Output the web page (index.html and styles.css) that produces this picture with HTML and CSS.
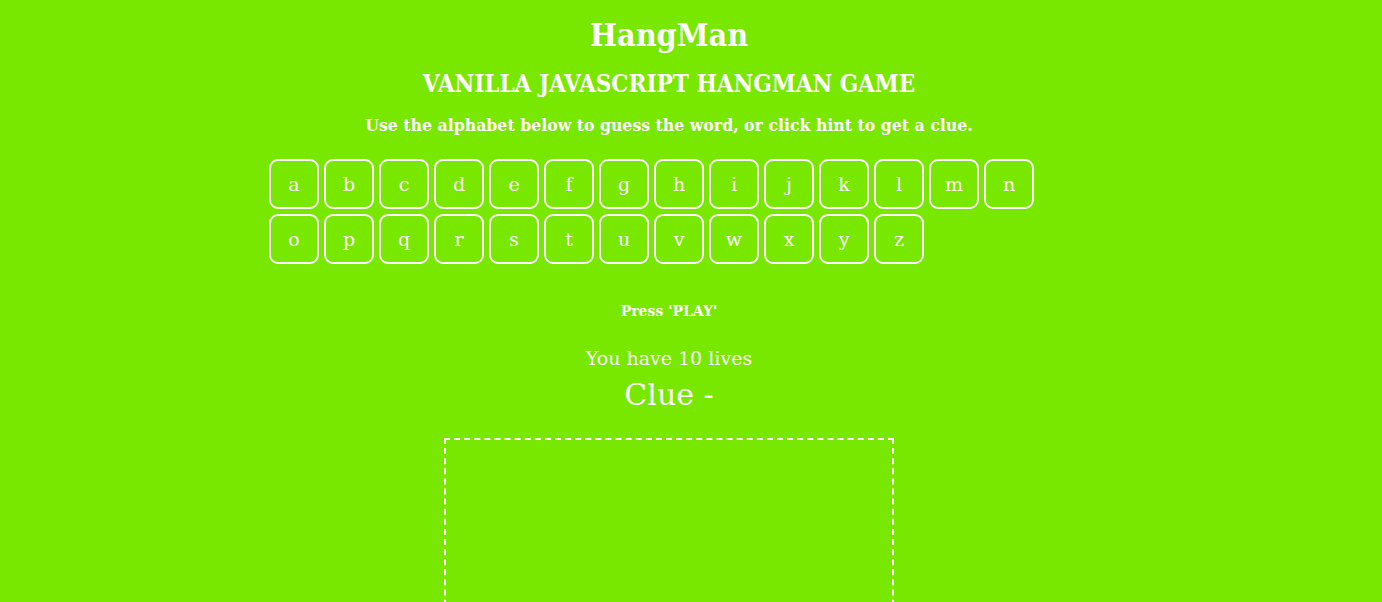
FILE: index.html
```html
<!DOCTYPE html>
<html lang="en">
<head>
<meta charset="utf-8">
<title>HangMan</title>
<link rel="stylesheet" href="styles.css">
</head>
<body>
<div class="wrapper">
  <h1 class="title">HangMan</h1>
  <h2 class="subtitle">VANILLA JAVASCRIPT HANGMAN GAME</h2>
  <p class="intro">Use the alphabet below to guess the word, or click hint to get a clue.</p>
  <div class="buttons">
    <ul class="alphabet">
      <li class="letter">a</li><li class="letter">b</li><li class="letter">c</li><li class="letter">d</li><li class="letter">e</li><li class="letter">f</li><li class="letter">g</li><li class="letter">h</li><li class="letter">i</li><li class="letter">j</li><li class="letter">k</li><li class="letter">l</li><li class="letter">m</li><li class="letter">n</li>
      <li class="letter">o</li><li class="letter">p</li><li class="letter">q</li><li class="letter">r</li><li class="letter">s</li><li class="letter">t</li><li class="letter">u</li><li class="letter">v</li><li class="letter">w</li><li class="letter">x</li><li class="letter">y</li><li class="letter">z</li>
    </ul>
  </div>
  <p class="catagory">Press 'PLAY'</p>
  <div class="hold"></div>
  <p class="lives">You have 10 lives</p>
  <p class="clue">Clue -</p>
  <div class="canvas-box"></div>
</div>
</body>
</html>
```

FILE: styles.css
```css
html, body {
  margin: 0;
  padding: 0;
}
body {
  background: #78e800;
  color: #ffffff;
  font-family: "DejaVu Serif", "Liberation Serif", serif;
  overflow: hidden;
}
.wrapper {
  margin-right: 44px;
  text-align: center;
}
.title {
  margin: 0;
  padding-top: 14px;
  font-family: "DejaVu Serif Condensed", "DejaVu Serif", serif;
  font-size: 32px;
  line-height: 42px;
  font-weight: bold;
}
.subtitle {
  margin: 12px 0 0;
  font-family: "DejaVu Serif Condensed", "DejaVu Serif", serif;
  font-size: 24px;
  line-height: 32px;
  font-weight: bold;
}
.intro {
  margin: 13px 0 0;
  font-family: "DejaVu Serif Condensed", "DejaVu Serif", serif;
  font-size: 17.5px;
  line-height: 24px;
  font-weight: bold;
}
.buttons {
  width: 800px;
  margin: 22px auto 0;
}
.alphabet {
  list-style: none;
  margin: 0;
  padding: 0;
  display: flex;
  flex-wrap: wrap;
  gap: 5px;
}
.letter {
  box-sizing: border-box;
  width: 50px;
  height: 50px;
  border: 2px solid #ffffff;
  border-radius: 9px;
  display: flex;
  align-items: center;
  justify-content: center;
  font-size: 19px;
}
.catagory {
  margin: 38px 0 0;
  font-size: 14px;
  line-height: 18px;
  font-weight: bold;
}
.lives {
  margin: 25px 0 0;
  font-size: 19px;
  line-height: 26px;
}
.clue {
  margin: 6px 0 0;
  font-size: 30px;
  line-height: 36px;
}
.canvas-box {
  box-sizing: border-box;
  width: 450px;
  height: 400px;
  margin: 25px auto 0;
  border: 2px dashed #ffffff;
}
```
